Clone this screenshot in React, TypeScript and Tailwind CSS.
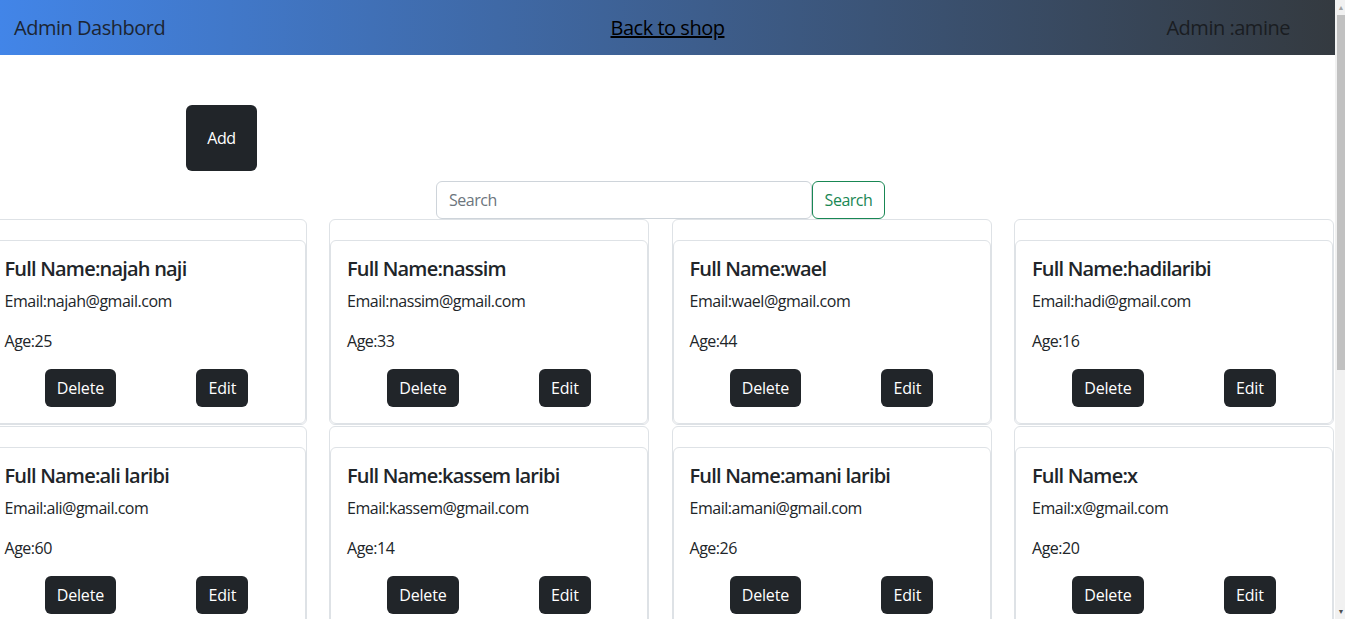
import React from 'react';

const users = [
  { name: 'najah naji', email: 'najah@gmail.com', age: 25 },
  { name: 'nassim', email: 'nassim@gmail.com', age: 33 },
  { name: 'wael', email: 'wael@gmail.com', age: 44 },
  { name: 'hadilaribi', email: 'hadi@gmail.com', age: 16 },
  { name: 'ali laribi', email: 'ali@gmail.com', age: 60 },
  { name: 'kassem laribi', email: 'kassem@gmail.com', age: 14 },
  { name: 'amani laribi', email: 'amani@gmail.com', age: 26 },
  { name: 'x', email: 'x@gmail.com', age: 20 },
];

const UserCard = ({ name, email, age }: { name: string; email: string; age: number }) => (
  <div className="border border-[#dee2e6] rounded-[6px] pt-[20px] bg-white">
    <div className="border border-[#dee2e6] rounded-[6px] p-4">
      <h5 className="text-[20px] leading-[24px] font-semibold tracking-[-0.04em] text-[#212529] mb-2">Full Name:{name}</h5>
      <p className="text-[16px] leading-[24px] mb-4">Email:{email}</p>
      <p className="text-[16px] leading-[24px] mb-4">Age:{age}</p>
      <div className="flex justify-around">
        <button className="bg-[#212529] text-white rounded-[6px] px-3 py-[7px] text-[16px] leading-[24px] tracking-[-0.01em]">Delete</button>
        <button className="bg-[#212529] text-white rounded-[6px] px-3 py-[7px] text-[16px] leading-[24px] tracking-[-0.01em]">Edit</button>
      </div>
    </div>
  </div>
);

export default function App() {
  return (
    <div className="flex h-[619px] w-full overflow-hidden bg-white text-[#212529] tracking-[-0.03em] font-['Open_Sans',sans-serif]">
      <div className="flex-1 min-w-0 overflow-hidden">
        {/* navbar */}
        <nav className="h-[55px] grid grid-cols-3 items-center bg-gradient-to-r from-[#4285e8] to-[#343a40] text-[20px]">
          <span className="pl-[14px] text-[#1c2533]">Admin Dashbord</span>
          <a className="text-center underline text-black">Back to shop</a>
          <span className="text-right pr-[45px] text-[#1a1d22]">Admin :amine</span>
        </nav>

        <div className="pt-[50px] pl-[186px]">
          <button className="w-[71px] h-[66px] bg-[#212529] text-white rounded-[6px] text-[16px]">Add</button>
        </div>

        <div className="mt-[10px] flex justify-center mr-[14px]">
          <input
            placeholder="Search"
            className="w-[376px] h-[38px] border border-[#ced4da] rounded-[6px] px-3 text-[16px] tracking-[-0.03em] placeholder:text-[#6c757d] outline-none"
          />
          <button className="w-[73px] h-[38px] border border-[#198754] text-[#198754] rounded-[6px] text-[16px]">Search</button>
        </div>

        <div className="ml-[-13.5px] grid grid-cols-[repeat(4,320px)] gap-x-[22.5px] gap-y-[1px]">
          {users.map((u) => (
            <UserCard key={u.email} {...u} />
          ))}
        </div>
      </div>

      {/* scrollbar */}
      <div className="w-[10px] h-full bg-[#f1f1f1] flex flex-col">
        <div className="h-[15px] flex items-center justify-end pr-[1px] text-[7px] leading-none text-[#a3a3a3]">▲</div>
        <div className="ml-[2px] h-[355px] bg-[#c1c1c1]" />
        <div className="flex-1" />
        <div className="h-[15px] flex items-center justify-end pr-[1px] text-[7px] leading-none text-[#505050]">▼</div>
      </div>
    </div>
  );
}
